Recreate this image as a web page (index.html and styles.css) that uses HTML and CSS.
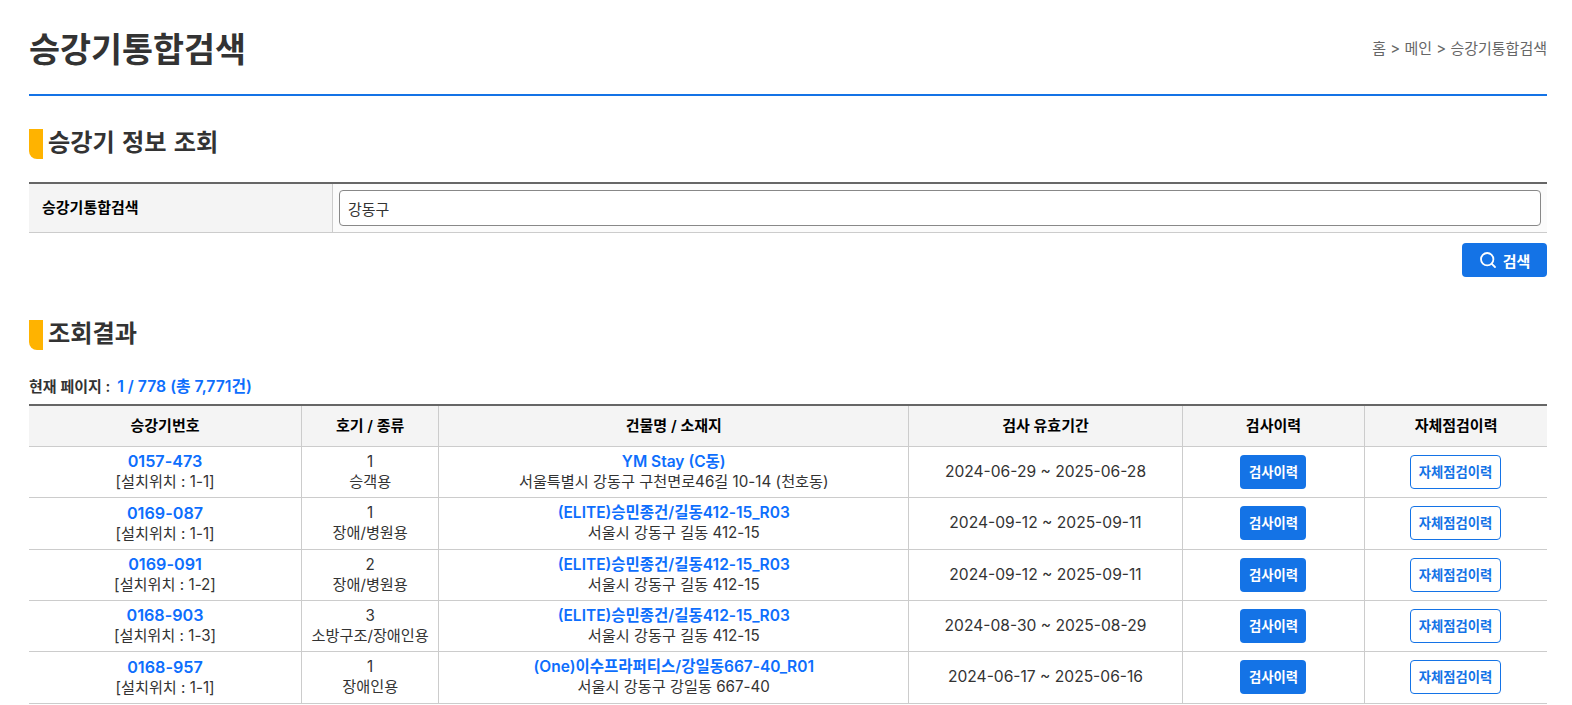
FILE: index.html
```html
<!DOCTYPE html>
<html lang="ko">
<head>
<meta charset="utf-8">
<title>승강기통합검색</title>
<link rel="stylesheet" href="styles.css">
</head>
<body>
<header class="page-head">
  <h1>승강기통합검색</h1>
  <div class="crumbs">홈 &gt; 메인 &gt; 승강기통합검색</div>
</header>
<h2 class="sec sec-first">승강기 정보 조회</h2>
<div class="search-row">
  <div class="search-label">승강기통합검색</div>
  <div class="search-field"><input class="search-input" type="text" value="강동구"></div>
</div>
<div class="actions">
  <button class="btn-search" type="button">
    <svg width="18" height="18" viewBox="0 0 18 18" fill="none" stroke="#fff" stroke-width="1.8" stroke-linecap="round"><circle cx="8.2" cy="8.2" r="6.2"/><path d="M12.8 12.8L16 16"/></svg>
    검색
  </button>
</div>
<h2 class="sec sec-second">조회결과</h2>
<p class="page-info">현재 페이지 : <b>1 / 778 (총 7,771건)</b></p>
<table class="results">
  <colgroup><col class="c1"><col class="c2"><col class="c3"><col class="c4"><col class="c5"><col class="c6"></colgroup>
  <thead>
    <tr><th>승강기번호</th><th>호기 / 종류</th><th>건물명 / 소재지</th><th>검사 유효기간</th><th>검사이력</th><th>자체점검이력</th></tr>
  </thead>
  <tbody>
    <tr>
      <td><a class="no">0157-473</a><br>[설치위치 : 1-1]</td>
      <td>1<br>승객용</td>
      <td><a>YM Stay (C동)</a><br><span class="addr">서울특별시 강동구 구천면로46길 10-14 (천호동)</span></td>
      <td class="date">2024-06-29 ~ 2025-06-28</td>
      <td><span class="btn solid">검사이력</span></td>
      <td><span class="btn line">자체점검이력</span></td>
    </tr>
    <tr>
      <td><a class="no">0169-087</a><br>[설치위치 : 1-1]</td>
      <td>1<br>장애/병원용</td>
      <td><a>(ELITE)승민종건/길동412-15_R03</a><br><span class="addr">서울시 강동구 길동 412-15</span></td>
      <td class="date">2024-09-12 ~ 2025-09-11</td>
      <td><span class="btn solid">검사이력</span></td>
      <td><span class="btn line">자체점검이력</span></td>
    </tr>
    <tr>
      <td><a class="no">0169-091</a><br>[설치위치 : 1-2]</td>
      <td>2<br>장애/병원용</td>
      <td><a>(ELITE)승민종건/길동412-15_R03</a><br><span class="addr">서울시 강동구 길동 412-15</span></td>
      <td class="date">2024-09-12 ~ 2025-09-11</td>
      <td><span class="btn solid">검사이력</span></td>
      <td><span class="btn line">자체점검이력</span></td>
    </tr>
    <tr>
      <td><a class="no">0168-903</a><br>[설치위치 : 1-3]</td>
      <td>3<br>소방구조/장애인용</td>
      <td><a>(ELITE)승민종건/길동412-15_R03</a><br><span class="addr">서울시 강동구 길동 412-15</span></td>
      <td class="date">2024-08-30 ~ 2025-08-29</td>
      <td><span class="btn solid">검사이력</span></td>
      <td><span class="btn line">자체점검이력</span></td>
    </tr>
    <tr>
      <td><a class="no">0168-957</a><br>[설치위치 : 1-1]</td>
      <td>1<br>장애인용</td>
      <td><a>(One)이수프라퍼티스/강일동667-40_R01</a><br><span class="addr">서울시 강동구 강일동 667-40</span></td>
      <td class="date">2024-06-17 ~ 2025-06-16</td>
      <td><span class="btn solid">검사이력</span></td>
      <td><span class="btn line">자체점검이력</span></td>
    </tr>
  </tbody>
</table>
</body>
</html>
```
FILE: styles.css
```css
* { box-sizing: border-box; }
html, body { margin: 0; padding: 0; }
body {
  padding: 0 25px 0 29px;
  background: #fff;
  color: #333;
  font-family: Inter, "Noto Sans CJK KR", sans-serif;
  font-size: 15px;
  overflow: hidden;
}
.page-head {
  display: flex;
  justify-content: space-between;
  align-items: center;
  height: 96px;
  border-bottom: 2px solid #1473e6;
}
h1 {
  margin: 0;
  font-size: 33.7px;
  font-weight: 700;
  color: #333;
}
.crumbs { font-size: 15px; color: #666; }
.sec {
  display: flex;
  align-items: flex-start;
  height: 30px;
  margin: 0;
  font-size: 24.2px;
  line-height: 28px;
  font-weight: 700;
  word-spacing: 1.5px;
  color: #333;
}
.sec::before {
  content: "";
  width: 14px;
  height: 30px;
  margin-right: 5px;
  background: #ffb300;
  border-bottom-left-radius: 8px;
}
.sec-first { margin-top: 33px; }
.sec-second { margin-top: 43px; }
.search-row {
  display: flex;
  height: 51px;
  margin-top: 23px;
  border-top: 2px solid #666;
  border-bottom: 1px solid #ccc;
}
.search-label {
  width: 304px;
  padding: 12px 13px 0;
  background: #f4f4f4;
  border-right: 1px solid #ccc;
  color: #000;
  font-size: 15px;
  font-weight: 700;
}
.search-field { flex: 1; padding: 6px 6px 0 6px; background: #fbfbfb; }
.search-input {
  display: block;
  width: 100%;
  height: 36px;
  padding: 0 8px;
  border: 1px solid #888;
  border-radius: 4px;
  background: #fff;
  color: #333;
  font: inherit;
  font-size: 15px;
}
.actions { display: flex; justify-content: flex-end; margin-top: 10px; }
.btn-search {
  display: flex;
  align-items: center;
  justify-content: center;
  gap: 6px;
  width: 85px;
  height: 34px;
  padding: 0;
  border: 0;
  border-radius: 4px;
  background: #1473e6;
  color: #fff;
  font: inherit;
  font-size: 15px;
  font-weight: 700;
}
.page-info {
  margin: 27px 0 0;
  height: 19px;
  line-height: 19px;
  font-size: 15px;
  font-weight: 600;
  color: #333;
}
.page-info b { margin-left: 3px; color: #0d6efd; font-size: 15.8px; font-weight: 600; }
.results {
  width: 100%;
  margin-top: 8px;
  border-collapse: collapse;
  table-layout: fixed;
  border-top: 2px solid #666;
  font-size: 15.2px;
  line-height: 20px;
  text-align: center;
}
.c1 { width: 272px; }
.c2 { width: 137px; }
.c3 { width: 469px; }
.c4 { width: 273px; }
.c5 { width: 182px; }
.c6 { width: 182px; }
.results th, .results td {
  padding: 0;
  border: 1px solid #ccc;
  vertical-align: middle;
}
.results th:first-child, .results td:first-child { border-left: 0; }
.results th:last-child, .results td:last-child { border-right: 0; }
.results th {
  height: 41px;
  background: #f4f4f4;
  color: #000;
  font-size: 15px;
  font-weight: 600;
}
.results td { height: 51px; color: #333; }
.results tr:nth-child(2) td, .results tr:nth-child(5) td { height: 52px; }
.results a { color: #0d6efd; font-size: 15.5px; font-weight: 600; }
.results .no { font-size: 16.2px; }
.results .date { font-size: 15.6px; }
.btn {
  display: inline-flex;
  align-items: center;
  justify-content: center;
  height: 34px;
  border-radius: 4px;
  font-size: 13.33px;
  font-weight: 700;
  vertical-align: middle;
}
.solid { width: 66px; background: #1473e6; color: #fff; }
.line { width: 91px; margin-right: 1px; border: 1px solid #1473e6; color: #1473e6; background: #fff; }
```
